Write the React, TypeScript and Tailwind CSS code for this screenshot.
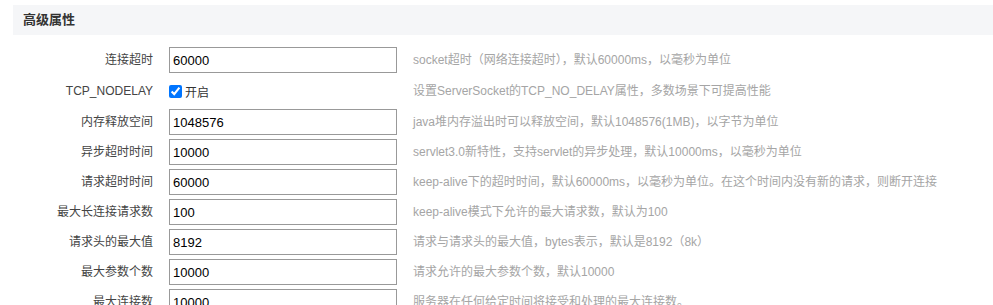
import React from "react";

const font = { fontFamily: '"Liberation Sans", Arial, "Noto Sans CJK SC", sans-serif' };

type Row = { label: string; value?: string; desc: string; checkbox?: boolean };

const rows: Row[] = [
  { label: "连接超时", value: "60000", desc: "socket超时（网络连接超时），默认60000ms，以毫秒为单位" },
  { label: "TCP_NODELAY", checkbox: true, desc: "设置ServerSocket的TCP_NO_DELAY属性，多数场景下可提高性能" },
  { label: "内存释放空间", value: "1048576", desc: "java堆内存溢出时可以释放空间，默认1048576(1MB)，以字节为单位" },
  { label: "异步超时时间", value: "10000", desc: "servlet3.0新特性，支持servlet的异步处理，默认10000ms，以毫秒为单位" },
  { label: "请求超时时间", value: "60000", desc: "keep-alive下的超时时间，默认60000ms，以毫秒为单位。在这个时间内没有新的请求，则断开连接" },
  { label: "最大长连接请求数", value: "100", desc: "keep-alive模式下允许的最大请求数，默认为100" },
  { label: "请求头的最大值", value: "8192", desc: "请求与请求头的最大值，bytes表示，默认是8192（8k）" },
  { label: "最大参数个数", value: "10000", desc: "请求允许的最大参数个数，默认10000" },
  { label: "最大连接数", value: "10000", desc: "服务器在任何给定时间将接受和处理的最大连接数。" },
];

export default function App() {
  return (
    <div className="w-[993px] h-[305px] overflow-hidden bg-white pl-[13px] pt-[5px]" style={font}>
      <div className="h-[30px] bg-[#f5f6f8] flex items-center pl-[10px]">
        <span className="text-[13px] font-bold text-[#333]">高级属性</span>
      </div>
      <div className="mt-[12px] flex flex-col gap-[4px]">
        {rows.map((r) => (
          <div key={r.label} className={`flex items-center ${r.checkbox ? "h-[28px]" : "h-[26px]"}`}>
            <div className="w-[140px] text-right text-[12px] text-[#444] shrink-0">{r.label}</div>
            <div className="w-[228px] ml-[16px] shrink-0">
              {r.checkbox ? (
                <label className="flex items-center text-[12px] text-[#333]">
                  <input type="checkbox" defaultChecked className="w-[13px] h-[13px] m-0 accent-[#0075ff]" />
                  <span className="ml-[3px] mt-[3px]">开启</span>
                </label>
              ) : (
                <input
                  defaultValue={r.value}
                  className="w-[228px] h-[26px] border border-[#999] px-[3px] text-[13px] text-[#000] outline-none"
                  style={font}
                />
              )}
            </div>
            <div className="ml-[16px] text-[12px] text-[#a5a5a5] whitespace-nowrap">{r.desc}</div>
          </div>
        ))}
      </div>
    </div>
  );
}
